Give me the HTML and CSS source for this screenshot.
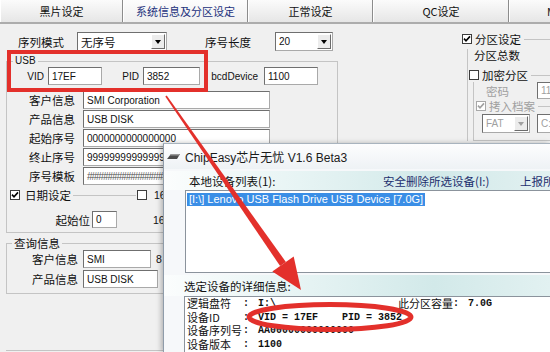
FILE: index.html
```html
<!DOCTYPE html>
<html lang="zh-CN">
<head>
    <meta charset="UTF-8">
    <title>ChipEasy</title>
    <link rel="stylesheet" href="styles.css">
</head>
<body>
    <!-- tab strip -->
    <div class="tabs">
        <div class="tab t1">黑片设定</div>
        <div class="tab t2 active">系统信息及分区设定</div>
        <div class="tab t3">正常设定</div>
        <div class="tab t4">QC设定</div>
        <div class="tab t5">MBR设定</div>
    </div>

    <div class="main">
        <div class="left">
            <div class="row-top">
                <span class="cn w59">序列模式</span>
                <div class="combo w90"><span class="cn">无序号</span><span class="drop"></span></div>
                <span class="cn len-lbl">序号长度</span>
                <div class="combo w58"><span>20</span><span class="drop"></span></div>
            </div>

            <fieldset class="group serial">
                <legend>USB</legend>
                <div class="usb">
                    <span class="vid-l">VID</span>
                    <div class="field w54">17EF</div>
                    <span class="pid-l">PID</span>
                    <div class="field w57">3852</div>
                    <span class="bcd-l">bcdDevice</span>
                    <div class="field w54">1100</div>
                </div>
                <div class="info first">
                    <span class="cn ilab">客户信息</span>
                    <div class="field w187">SMI Corporation</div>
                </div>
                <div class="info">
                    <span class="cn ilab">产品信息</span>
                    <div class="field w187">USB DISK</div>
                </div>
                <div class="info">
                    <span class="cn ilab">起始序号</span>
                    <div class="field w187">0000000000000000</div>
                </div>
                <div class="info">
                    <span class="cn ilab">终止序号</span>
                    <div class="field w187">9999999999999999</div>
                </div>
                <div class="info">
                    <span class="cn ilab">序号模板</span>
                    <div class="field w187 hash">################################</div>
                </div>
                <div class="date">
                    <svg class="cb cb-first" width="10" height="10" viewBox="0 0 10 10"><rect x=".5" y=".5" width="9" height="9" fill="#fff" stroke="#3c3c3c"/><path d="M2 4.6 L4 6.8 L8 2.4" fill="none" stroke="#000" stroke-width="1.6"/></svg>
                    <span class="cn date-txt">日期设定</span>
                    <span class="hline"></span>
                    <svg class="cb" width="10" height="10" viewBox="0 0 10 10"><rect x=".5" y=".5" width="9" height="9" fill="#fff" stroke="#3c3c3c"/></svg>
                    <span class="num">16</span>
                </div>
                <div class="start">
                    <span class="cn start-l">起始位</span>
                    <div class="field w25">0</div>
                    <span class="num num-far">16</span>
                </div>
            </fieldset>

            <fieldset class="group query">
                <legend class="cn">查询信息</legend>
                <div class="qrow first">
                    <span class="cn qlab">客户信息</span>
                    <div class="field w68">SMI</div>
                    <span class="num num-q">8</span>
                </div>
                <div class="qrow">
                    <span class="cn qlab">产品信息</span>
                    <div class="field w75">USB DISK</div>
                </div>
            </fieldset>
            <div class="next-group"></div>
        </div>

        <div class="right">
            <div class="rhead">
                <svg class="cb" width="10" height="10" viewBox="0 0 10 10"><rect x=".5" y=".5" width="9" height="9" fill="#fff" stroke="#3c3c3c"/><path d="M2 4.6 L4 6.8 L8 2.4" fill="none" stroke="#000" stroke-width="1.6"/></svg>
                <span class="cn">分区设定</span>
                <span class="line"></span>
            </div>
            <div class="rbody">
                <div class="cn total">分区总数</div>
                <div class="rhead enc">
                    <svg class="cb" width="10" height="10" viewBox="0 0 10 10"><rect x=".5" y=".5" width="9" height="9" fill="#fff" stroke="#3c3c3c"/></svg>
                    <span class="cn">加密分区</span>
                    <span class="line"></span>
                </div>
                <div class="inner">
                    <div class="pwd">
                        <span class="cn off">密码</span>
                        <div class="field off w30">11</div>
                    </div>
                    <div class="rhead copy">
                        <svg class="cb" width="10" height="10" viewBox="0 0 10 10"><rect x=".5" y=".5" width="9" height="9" fill="#fff" stroke="#a8a8a8"/><path d="M2 4.6 L4 6.8 L8 2.4" fill="none" stroke="#a0a0a0" stroke-width="1.6"/></svg>
                        <span class="cn off">拷入档案</span>
                        <span class="line"></span>
                    </div>
                    <div class="fat-row">
                        <div class="combo off w48"><span>FAT</span><span class="drop off"></span></div>
                        <div class="field off w30">C:\</div>
                    </div>
                </div>
            </div>
        </div>
    </div>

    <!-- ChipEasy window lying over the dialog -->
    <div class="win">
        <div class="win-title">
            <svg width="13" height="7" viewBox="0 0 13 7"><path d="M0 6 L4 1 L13 1 L10 6 Z" fill="#4b4b4b"/><path d="M4 1 L13 1 L12 2.5 L3 2.5 Z" fill="#9a9a9a"/></svg>
            <span>ChipEasy芯片无忧 V1.6 Beta3</span>
        </div>
        <div class="band">
            <span class="cn list-lbl">本地设备列表(1):</span>
            <span class="cn link">安全删除所选设备(I:)</span>
            <span class="cn link">上报所选设备</span>
        </div>
        <div class="list">
            <span class="sel">[I:\] Lenovo USB Flash Drive USB Device [7.0G]</span>
        </div>
        <div class="band band2">
            <span class="cn">选定设备的详细信息:</span>
        </div>
        <div class="details">
            <div class="drow">
                <span class="cn dl">逻辑盘符</span><span class="dc">:</span><span class="dv dv1">I:\</span><span class="cn">此分区容量</span><span class="dv">:</span><span class="dv cap">7.0G</span>
            </div>
            <div class="drow">
                <span class="cn dl">设备ID</span><span class="dc">:</span><span class="dv">VID = 17EF    PID = 3852</span>
            </div>
            <div class="drow">
                <span class="cn dl">设备序列号</span><span class="dc">:</span><span class="dv">AA00000000000000</span>
            </div>
            <div class="drow">
                <span class="cn dl">设备版本</span><span class="dc">:</span><span class="dv">1100</span>
            </div>
        </div>
    </div>

    <!-- red annotation marks -->
    <svg class="marks" width="550" height="352" viewBox="0 0 550 352">
        <rect x="9" y="52" width="197" height="38" fill="none" stroke="#e3302b" stroke-width="4"/>
        <polygon points="166.7,95.5 285.9,262 280.1,266 165.3,96.5" fill="#e3302b"/>
        <polygon points="301,290 293.7,256.6 272.3,271.4" fill="#e3302b"/>
        <ellipse cx="330" cy="317" rx="81" ry="12.5" fill="none" stroke="#e3302b" stroke-width="5"/>
    </svg>
</body>
</html>
```

FILE: styles.css
```css
* {
    box-sizing: border-box;
}
body {
    margin: 0;
    width: 550px;
    height: 352px;
    overflow: hidden;
    position: relative;
    background: #f0f0f0;
    font-family: "Liberation Sans", "Noto Sans CJK SC", sans-serif;
    font-size: 10px;
    color: #111;
}
.cn {
    font-family: "Noto Sans CJK SC", sans-serif;
    font-size: 11.5px;
    line-height: 14px;
    white-space: nowrap;
}
.off {
    color: #a0a0a0;
}

/* tabs */
.tabs {
    display: flex;
    height: 24px;
    border-bottom: 2px solid #acacac;
    overflow: hidden;
}
.tab {
    flex: none;
    height: 22px;
    display: flex;
    align-items: center;
    justify-content: center;
    background: linear-gradient(#fbfbfb, #e6e6e6);
    border-left: 1px solid #fff;
    border-right: 1px solid #8c8c8c;
    font-family: "Noto Sans CJK SC", sans-serif;
    font-size: 11px;
}
.t1 { width: 123px; }
.t2 { width: 125px; }
.t3 { width: 125px; }
.t4 { width: 136px; }
.t5 { width: 121px; }
.active {
    color: #23317c;
    background: linear-gradient(#fdfdfd, #efefef);
}

.main {
    display: flex;
    padding-top: 8px;
}
.left {
    flex: none;
    width: 332px;
    margin-left: 6px;
}
.right {
    flex: none;
    width: 88px;
    margin-left: 124px;
}

/* common controls */
.field {
    flex: none;
    height: 18px;
    display: flex;
    align-items: center;
    padding-left: 3px;
    background: #fff;
    border: 1px solid;
    border-color: #6f6f6f #a9a9a9 #a9a9a9 #6f6f6f;
    white-space: nowrap;
    overflow: hidden;
}
.combo {
    flex: none;
    display: flex;
    align-items: center;
    height: 19px;
    padding: 1px;
    background: #fff;
    border: 1px solid;
    border-color: #6f6f6f #a9a9a9 #a9a9a9 #6f6f6f;
}
.combo > span:first-child {
    flex: 1;
    padding-left: 2px;
}
.drop {
    width: 14px;
    height: 15px;
    display: flex;
    align-items: center;
    justify-content: center;
    background: #ececec;
    border: 1px solid;
    border-color: #fff #6b6b6b #6b6b6b #fff;
}
.drop::after {
    content: "";
    border-left: 3px solid transparent;
    border-right: 3px solid transparent;
    border-top: 4px solid #000;
}
.drop.off::after {
    border-top-color: #a0a0a0;
}
.cb {
    flex: none;
    display: block;
}
.w25 { width: 25px; height: 17px; }
.w30 { width: 30px; }
.w48 { width: 48px; }
.w54 { width: 54px; }
.w57 { width: 57px; }
.w58 { width: 58px; }
.w59 { width: 59px; }
.w68 { width: 68px; }
.w75 { width: 75px; }
.w90 { width: 90px; }
.w187 { width: 187px; }
.hash {
    color: #555;
    letter-spacing: -1px;
}
.num {
    font-size: 10.5px;
    white-space: nowrap;
}

/* top row */
.row-top {
    display: flex;
    align-items: center;
    height: 19px;
    padding-left: 12px;
}
.len-lbl {
    width: 70px;
    margin-left: 38px;
}

/* group boxes */
fieldset.group {
    margin: 4px 0 0;
    padding: 0 0 4px;
    min-width: 0;
    border: 1px solid #c4c4c4;
}
legend {
    margin-left: 6px;
    padding: 0 2px;
    font-size: 10px;
    line-height: 12px;
}
legend.cn {
    margin-left: 5px;
    line-height: 12px;
}
.usb {
    display: flex;
    align-items: center;
    height: 18px;
}
.vid-l, .pid-l {
    width: 37px;
    margin-right: 4px;
    text-align: right;
}
.bcd-l {
    width: 58px;
    margin-right: 6px;
    text-align: right;
}
.info {
    display: flex;
    align-items: center;
    height: 18px;
    margin-top: 1px;
}
.info.first {
    margin-top: 6px;
}
.ilab {
    width: 68px;
    margin-right: 8px;
    text-align: right;
}
.date {
    display: flex;
    align-items: center;
    height: 14px;
    margin-top: 3px;
}
.cb-first {
    margin-left: 3px;
}
.date-txt {
    margin-left: 5px;
}
.hline {
    width: 63px;
    height: 1px;
    margin: 0 1px 0 2px;
    background: #c4c4c4;
}
.date .num {
    margin-left: 7px;
}
.start {
    display: flex;
    align-items: center;
    height: 17px;
    margin-top: 9px;
}
.start-l {
    width: 83px;
    margin-right: 2px;
    text-align: right;
}
.num-far {
    margin-left: 36px;
}
fieldset.query {
    padding-bottom: 5px;
}
.qrow {
    display: flex;
    align-items: center;
    height: 18px;
    margin-top: 2px;
}
.qrow.first {
    margin-top: 1px;
}
.qlab {
    width: 71px;
    margin-right: 5px;
    text-align: right;
}
.num-q {
    margin-left: 5px;
}
.next-group {
    margin-top: 56px;
    border-top: 1px solid #c4c4c4;
}

/* right side partition box */
.rhead {
    display: flex;
    align-items: center;
    height: 14px;
}
.rhead .cn {
    margin-left: 3px;
}
.rhead .line {
    flex: 1;
    min-width: 6px;
    height: 1px;
    margin-left: 3px;
    background: #c4c4c4;
}
.rbody {
    margin-left: 5px;
    padding-left: 1px;
    border-left: 1px solid #c4c4c4;
}
.total {
    height: 12px;
    line-height: 12px;
    margin: 3px 0 0 5px;
}
.enc {
    margin-top: 7px;
}
.inner {
    margin-left: 4px;
    padding-bottom: 7px;
    border-left: 1px solid #c4c4c4;
    border-bottom: 1px solid #c4c4c4;
}
.pwd {
    display: flex;
    align-items: center;
    height: 17px;
}
.pwd .cn {
    margin-left: 12px;
}
.pwd .field {
    height: 17px;
    margin-left: 28px;
}
.copy .cb {
    margin-left: 2px;
}
.fat-row {
    display: flex;
    align-items: center;
    height: 19px;
    margin-top: 1px;
}
.fat-row .combo {
    margin-left: 8px;
    background: #fff;
}
.fat-row .field {
    height: 19px;
    margin-left: 7px;
}

/* ChipEasy window */
.win {
    position: absolute;
    left: 163px;
    top: 143px;
    width: 387px;
    height: 209px;
    overflow: hidden;
    background: #f6f8fa;
    border-left: 1px solid #8f9caa;
    border-top: 1px solid #a8b3be;
    box-shadow: -2px 0 5px rgba(0, 0, 0, 0.25);
}
.win-title {
    height: 25px;
    display: flex;
    align-items: center;
    padding-left: 3px;
    background: linear-gradient(#fdfdfe, #eef2f5);
    font-size: 12px;
    color: #1b1b1b;
    white-space: nowrap;
}
.win-title svg {
    margin-right: 5px;
}
.band {
    display: flex;
    align-items: center;
    height: 19px;
    margin-top: 2px;
    padding-left: 25px;
    background: linear-gradient(to right, #fbfdfd 0%, #e7f4f4 35%, #d2e9e9 70%, #e2f1f1 100%);
}
.band > span {
    flex: none;
}
.list-lbl {
    width: 194px;
}
.link {
    width: 137px;
    color: #1d2f6e;
}
.list {
    width: 400px;
    height: 83px;
    margin-left: 21px;
    padding: 2px 0 0 1px;
    background: #fff;
    border: 1px solid #8b939c;
}
.sel {
    display: inline-block;
    height: 13px;
    padding: 0 2px;
    line-height: 13px;
    font-size: 11px;
    color: #fff;
    background: #3a8ee6;
    white-space: nowrap;
}
.band2 {
    height: 21px;
    padding-left: 20px;
}
.details {
    width: 400px;
    height: 80px;
    margin-left: 20px;
    padding-left: 2px;
    background: #fff;
    border: 1px solid #8b939c;
}
.drow {
    display: flex;
    height: 13.5px;
    white-space: pre;
}
.drow > span {
    flex: none;
}
.drow .cn {
    font-size: 11px;
    line-height: 13.5px;
}
.dl {
    width: 56px;
}
.dc, .dv {
    font-family: "Liberation Mono", monospace;
    font-size: 10px;
    font-weight: bold;
    line-height: 13.5px;
}
.dc {
    width: 15px;
}
.dv1 {
    width: 140px;
}
.cap {
    margin-left: 9px;
}

/* annotations */
.marks {
    position: absolute;
    left: 0;
    top: 0;
    pointer-events: none;
}
```
